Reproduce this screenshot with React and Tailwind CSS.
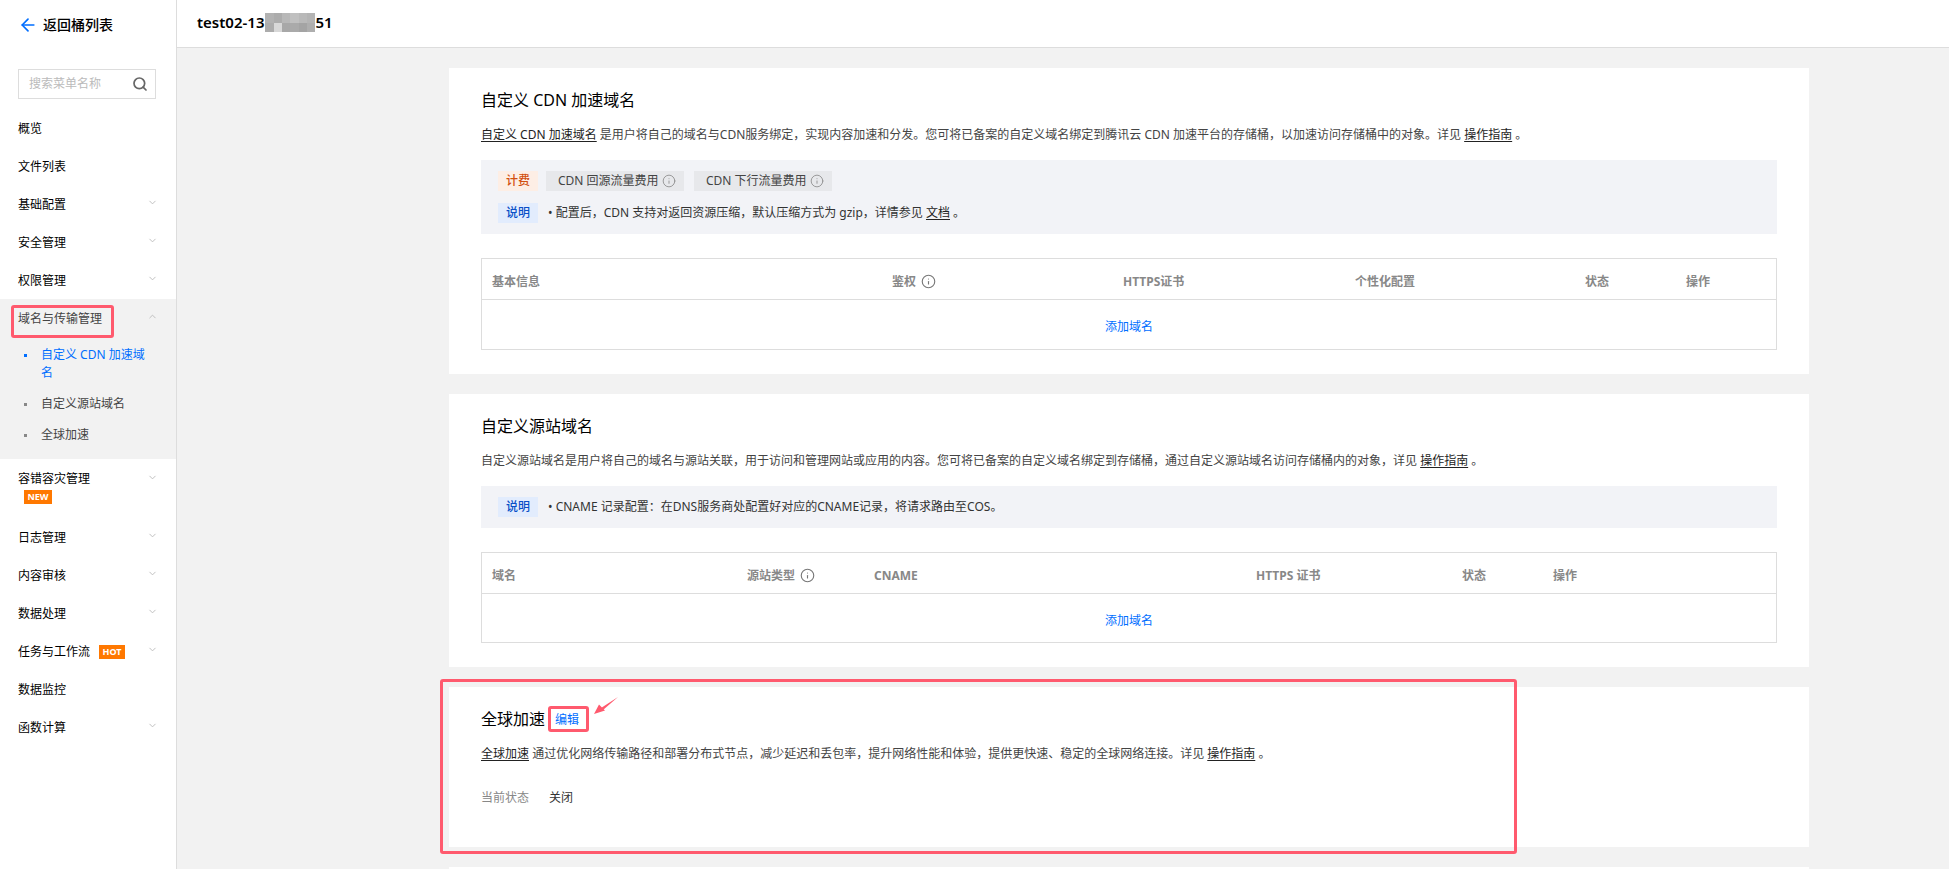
import React from "react";
import { ArrowLeft, ChevronDown, ChevronUp, Info, Search } from "lucide-react";

const menuBefore = [
  { label: "概览" },
  { label: "文件列表" },
  { label: "基础配置", arrow: true },
  { label: "安全管理", arrow: true },
  { label: "权限管理", arrow: true },
];

const menuAfter = [
  { label: "日志管理", arrow: true },
  { label: "内容审核", arrow: true },
  { label: "数据处理", arrow: true },
  { label: "任务与工作流", arrow: true, hot: true },
  { label: "数据监控" },
  { label: "函数计算", arrow: true },
];

const mosaic = [
  "bg-[#b2b2b2]", "bg-[#acacac]", "bg-[#b8b8b8]", "bg-[#c0c0c0]", "bg-[#b9b9b9]", "bg-[#b4b4b4]",
  "bg-[#acacac]", "bg-[#d8d8d8]", "bg-[#a8a8a8]", "bg-[#aaaaaa]", "bg-[#a4a4a4]", "bg-[#aeaeae]",
];

const MenuItem = ({ item }) => (
  <div className="h-[38px] pl-[18px] pr-[18px] pt-[2px] flex items-center justify-between text-xs text-black">
    <div className="flex items-center">
      <span>{item.label}</span>
      {item.hot && (
        <span className="ml-[9px] h-[14px] w-[26px] bg-[#ff7800] text-white text-[9px] font-bold flex items-center justify-center">
          HOT
        </span>
      )}
    </div>
    {item.arrow && <ChevronDown size={11} strokeWidth={2} className="text-[#bbbbbb] -mt-[5px]" />}
  </div>
);

const SubItem = ({ children, active }) => (
  <div className={`flex pl-[24px] pr-[28px] text-xs leading-[18px] ${active ? "text-[#006eff]" : "text-[#444444]"}`}>
    <span className={`w-[3px] h-[3px] mt-[8px] mr-[14px] shrink-0 ${active ? "bg-[#006eff]" : "bg-[#888888]"}`} />
    <span>{children}</span>
  </div>
);

const Sidebar = () => (
  <aside className="w-[177px] shrink-0 bg-white border-r border-[#dddddd] relative">
    <div className="h-[50px] pl-[18px] flex items-center gap-[5px] text-sm font-medium text-black">
      <ArrowLeft size={20} strokeWidth={2} className="text-[#006eff]" />
      <span>返回桶列表</span>
    </div>
    <div className="ml-[18px] mt-[19px] w-[138px] h-[30px] border border-[#dddddd] pl-[10px] pr-[7px] flex items-center justify-between text-xs text-[#bbbbbb]">
      <span>搜索菜单名称</span>
      <Search size={16} strokeWidth={2.6} className="text-[#666666]" />
    </div>
    <div className="mt-[10px]">
      {menuBefore.map((item) => (
        <MenuItem key={item.label} item={item} />
      ))}
      <div className="h-[160px] bg-[#f2f2f2]">
        <div className="h-[38px] pl-[18px] pr-[18px] pt-[2px] flex items-center justify-between text-xs text-[#444444]">
          <span>域名与传输管理</span>
          <ChevronUp size={11} strokeWidth={2} className="text-[#bbbbbb] -mt-[5px]" />
        </div>
        <div className="pt-[9px]">
          <SubItem active>自定义 CDN 加速域名</SubItem>
          <div className="mt-[13px]">
            <SubItem>自定义源站域名</SubItem>
          </div>
          <div className="mt-[13px]">
            <SubItem>全球加速</SubItem>
          </div>
        </div>
      </div>
      <div className="h-[59px] pl-[18px] pr-[18px] pt-[11px] text-xs text-black">
        <div className="flex items-center justify-between h-[18px]">
          <span>容错容灾管理</span>
          <ChevronDown size={11} strokeWidth={2} className="text-[#bbbbbb] -mt-[3px]" />
        </div>
        <span className="ml-[6px] mt-[2px] h-[14px] w-[28px] bg-[#ff7800] text-white text-[9px] font-bold flex items-center justify-center">
          NEW
        </span>
      </div>
      {menuAfter.map((item) => (
        <MenuItem key={item.label} item={item} />
      ))}
    </div>
    <div className="absolute left-[11px] top-[305px] w-[103px] h-[33px] border-[3px] border-[#ff5a6e] rounded-[3px]" />
  </aside>
);

const Link = ({ children }) => <span className="text-[#222222] underline underline-offset-2">{children}</span>;

const Tag = ({ className, children }) => (
  <span className={`w-[40px] h-[20px] flex items-center justify-center font-medium shrink-0 ${className}`}>{children}</span>
);

const Chip = ({ children }) => (
  <span className="w-[138px] h-[20px] bg-[#e7e8eb] pl-[12px] flex items-center gap-[3px] text-[#444444]">
    {children}
    <Info size={14} strokeWidth={1.4} className="text-[#888888]" />
  </span>
);

const Head = ({ children, icon }) => (
  <div className="pl-[10px] pt-[5px] flex items-center gap-[5px] font-bold">
    {children}
    {icon && <Info size={15} strokeWidth={1.8} className="text-[#777777]" />}
  </div>
);

const Title = ({ children }) => <h2 className="h-[24px] leading-[24px] text-base font-normal text-black">{children}</h2>;

const Desc = ({ children }) => <p className="mt-[13px] h-[20px] leading-[20px] text-xs text-[#444444]">{children}</p>;

const DomainTable = ({ cols, heads, h }) => (
  <div className={`mt-[24px] border border-[#dddddd] text-xs ${h}`}>
    <div className={`grid h-[41px] border-b border-[#dddddd] text-[#888888] ${cols}`}>
      {heads.map((head) => (
        <Head key={head.label} icon={head.icon}>{head.label}</Head>
      ))}
    </div>
    <div className="h-[48px] pt-[6px] flex items-center justify-center text-[#006eff]">添加域名</div>
  </div>
);

const App = () => (
  <div className="flex h-[869px] overflow-hidden bg-[#f2f2f2] font-['Noto_Sans','Noto_Sans_CJK_SC',sans-serif]">
    <Sidebar />
    <main className="flex-1 min-w-0 relative">
      <header className="h-[48px] bg-white border-b border-[#dddddd] pl-[20px] flex items-start pt-[11px] text-[15px] font-semibold text-black">
        <span>test02-13</span>
        <span className="w-[50px] h-[19px] ml-[1px] mt-[2px] grid grid-cols-6 grid-rows-2">
          {mosaic.map((c, i) => (
            <span key={i} className={c} />
          ))}
        </span>
        <span>51</span>
      </header>

      <div className="pt-[20px] pl-[272px] pr-[140px] flex flex-col gap-[20px]">
        <section className="h-[306px] bg-white pt-[20px] px-[32px]">
          <Title>自定义 CDN 加速域名</Title>
          <Desc>
            <Link>自定义 CDN 加速域名</Link> 是用户将自己的域名与CDN服务绑定，实现内容加速和分发。您可将已备案的自定义域名绑定到腾讯云 CDN 加速平台的存储桶，以加速访问存储桶中的对象。详见 <Link>操作指南</Link> 。
          </Desc>
          <div className="mt-[15px] h-[74px] bg-[#f2f3f7] pt-[11px] pl-[17px] text-xs flex flex-col gap-[12px]">
            <div className="flex items-center gap-[8px]">
              <Tag className="bg-[#fdeee5] text-[#d2500f]">计费</Tag>
              <Chip>CDN 回源流量费用</Chip>
              <span className="ml-[2px]">
                <Chip>CDN 下行流量费用</Chip>
              </span>
            </div>
            <div className="flex items-center gap-[8px]">
              <Tag className="bg-[#e2ecfd] text-[#0a50c8]">说明</Tag>
              <span className="ml-[2px] text-[#333333]">
                • 配置后，CDN 支持对返回资源压缩，默认压缩方式为 gzip，详情参见 <Link>文档</Link> 。
              </span>
            </div>
          </div>
          <DomainTable
            h="h-[92px]"
            cols="grid-cols-[400px_231px_232px_230px_101px_1fr]"
            heads={[
              { label: "基本信息" },
              { label: "鉴权", icon: true },
              { label: "HTTPS证书" },
              { label: "个性化配置" },
              { label: "状态" },
              { label: "操作" },
            ]}
          />
        </section>

        <section className="h-[273px] bg-white pt-[20px] px-[32px]">
          <Title>自定义源站域名</Title>
          <Desc>
            自定义源站域名是用户将自己的域名与源站关联，用于访问和管理网站或应用的内容。您可将已备案的自定义域名绑定到存储桶，通过自定义源站域名访问存储桶内的对象，详见 <Link>操作指南</Link> 。
          </Desc>
          <div className="mt-[15px] h-[42px] bg-[#f2f3f7] pl-[17px] text-xs flex items-center gap-[8px]">
            <Tag className="bg-[#e2ecfd] text-[#0a50c8]">说明</Tag>
            <span className="ml-[2px] text-[#333333]">• CNAME 记录配置：在DNS服务商处配置好对应的CNAME记录，将请求路由至COS。</span>
          </div>
          <DomainTable
            h="h-[91px]"
            cols="grid-cols-[255px_127px_382px_206px_91px_1fr]"
            heads={[
              { label: "域名" },
              { label: "源站类型", icon: true },
              { label: "CNAME" },
              { label: "HTTPS 证书" },
              { label: "状态" },
              { label: "操作" },
            ]}
          />
        </section>

        <section className="h-[160px] bg-white pt-[20px] px-[32px]">
          <div className="flex items-center gap-[8px]">
            <Title>全球加速</Title>
            <span className="text-xs text-[#006eff] ml-[2px] mt-[2px]">编辑</span>
          </div>
          <Desc>
            <Link>全球加速</Link> 通过优化网络传输路径和部署分布式节点，减少延迟和丢包率，提升网络性能和体验，提供更快速、稳定的全球网络连接。详见 <Link>操作指南</Link> 。
          </Desc>
          <div className="mt-[26px] flex gap-[20px] text-xs">
            <span className="text-[#888888]">当前状态</span>
            <span className="text-[#333333]">关闭</span>
          </div>
        </section>

        <section className="h-[100px] bg-white" />
      </div>

      <div className="absolute left-[263px] top-[679px] w-[1077px] h-[175px] border-[3px] border-[#ff5a6e] rounded-[3px]" />
      <div className="absolute left-[371px] top-[706px] w-[41px] h-[26px] border-[3px] border-[#ff5a6e] rounded-[3px]" />
      <svg className="absolute left-[415px] top-[696px]" width="28" height="20" viewBox="0 0 28 20">
        <path d="M26 1 L9 12 L11 14 Z M2 18 L13 14.5 L7 8.5 Z" fill="#ff5a6e" />
      </svg>
    </main>
  </div>
);

export default App;
